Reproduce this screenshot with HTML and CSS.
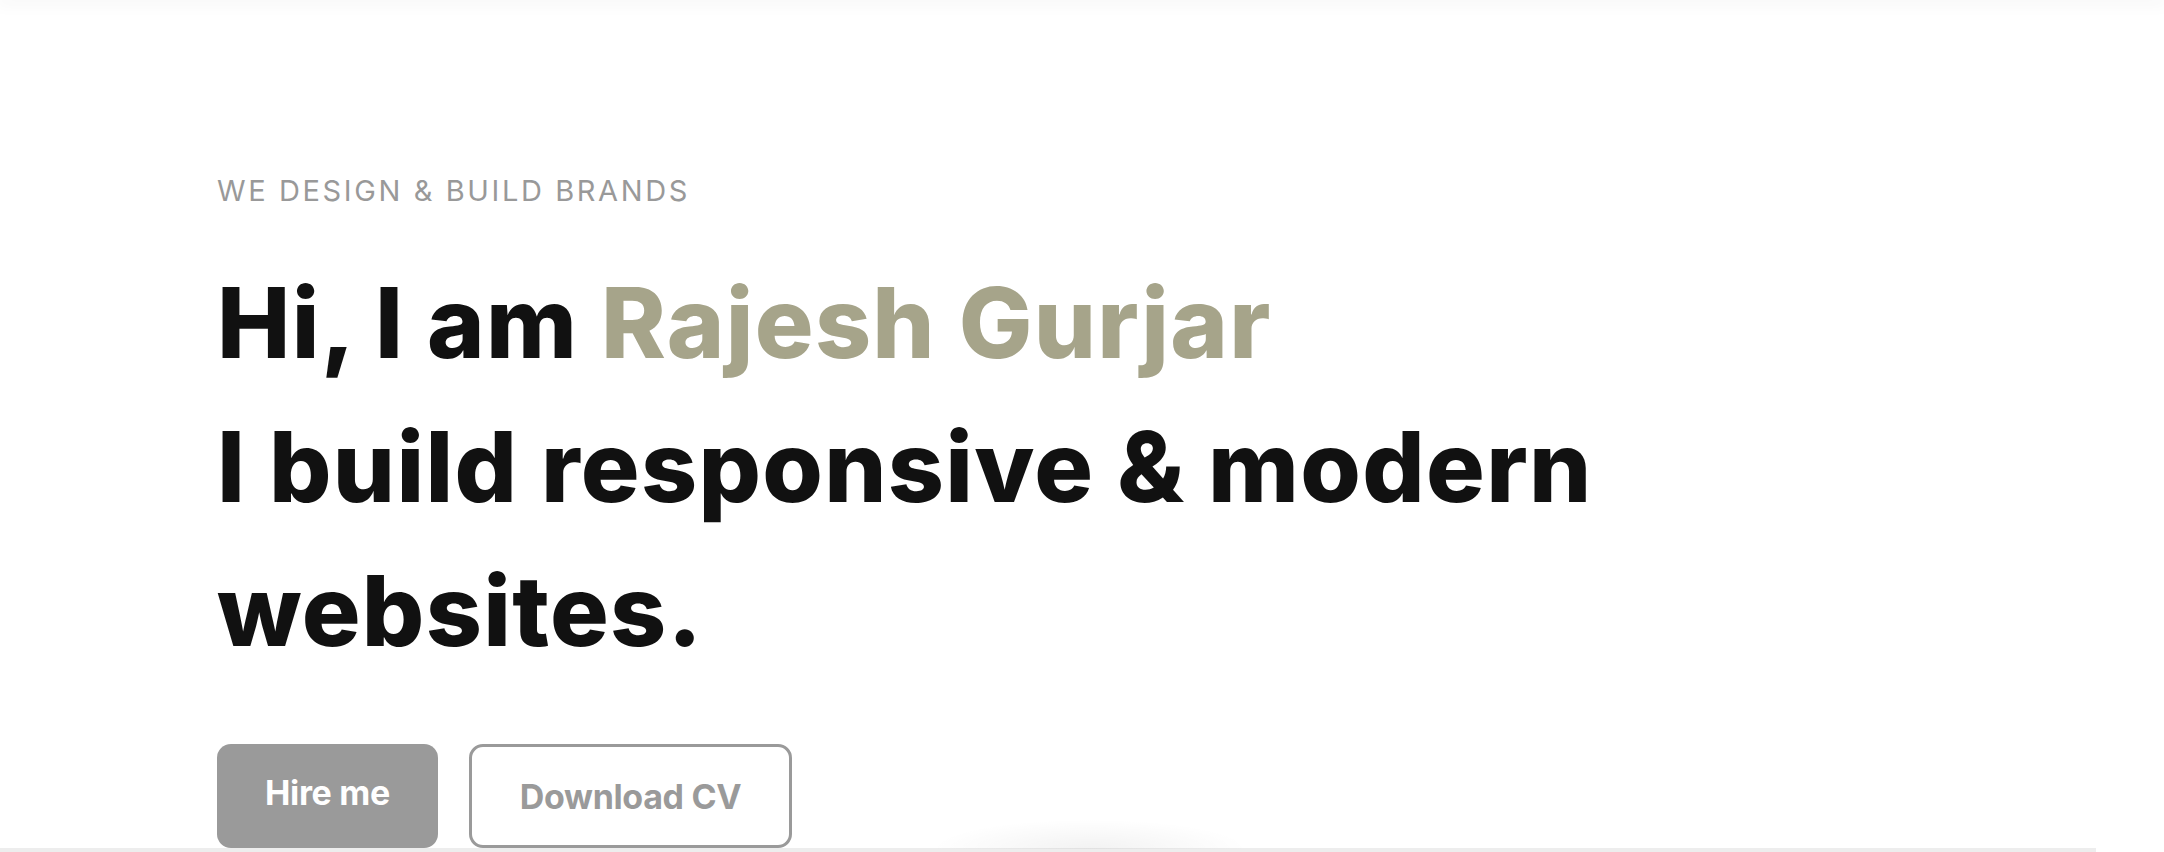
FILE: index.html
```html
<!DOCTYPE html>
<html lang="en">
<head>
<meta charset="utf-8">
<title>Rajesh Gurjar</title>
<link rel="stylesheet" href="styles.css">
</head>
<body>
<div class="topbar"></div>
<section class="hero">
  <p class="eyebrow">WE DESIGN &amp; BUILD BRANDS</p>
  <h1 class="title">Hi, I am <span class="name">Rajesh Gurjar</span><br>I build responsive &amp; modern<br>websites.</h1>
  <div class="actions">
    <a class="btn btn-fill" href="#">Hire me</a>
    <a class="btn btn-outline" href="#">Download CV</a>
  </div>
</section>
<div class="next"></div>
</body>
</html>
```
FILE: styles.css
```css
html, body {
  margin: 0;
  padding: 0;
  background: #fff;
  overflow: hidden;
}
body {
  font-family: "Inter", "Noto Sans", sans-serif;
  color: #111;
}
.topbar {
  height: 0;
  box-shadow: 0 0 16px 4px rgba(0, 0, 0, 0.05);
  position: relative;
  z-index: 2;
}
.hero {
  padding: 170px 0 0 217px;
}
.eyebrow {
  margin: 0;
  font-size: 29px;
  line-height: 42px;
  font-weight: 400;
  letter-spacing: 0.09em;
  color: #999;
}
.title {
  margin: 39px 0 0;
  font-size: 98px;
  line-height: 144px;
  font-weight: 800;
  color: #111;
  letter-spacing: 1.3px;
}
.name {
  color: #a6a48a;
}
.actions {
  margin-top: 61px;
  display: flex;
  gap: 31px;
}
.btn {
  box-sizing: border-box;
  height: 104px;
  padding: 0 48px 8px;
  display: flex;
  align-items: center;
  justify-content: center;
  border-radius: 14px;
  font-size: 34px;
  font-weight: 700;
  text-decoration: none;
  letter-spacing: -0.01em;
}
.btn-fill {
  background: #9a9a9a;
  color: #fff;
}
.btn-outline {
  background: #fff;
  color: #9a9a9a;
  border: 3px solid #9a9a9a;
  padding-bottom: 0;
}
.next {
  position: relative;
  width: 2096px;
  height: 4px;
  background: #ededed;
}
.next::before {
  content: "";
  position: absolute;
  left: 930px;
  bottom: 3px;
  width: 320px;
  height: 30px;
  background: radial-gradient(ellipse at 50% 100%, rgba(0, 0, 0, 0.05), rgba(0, 0, 0, 0) 70%);
}
```
